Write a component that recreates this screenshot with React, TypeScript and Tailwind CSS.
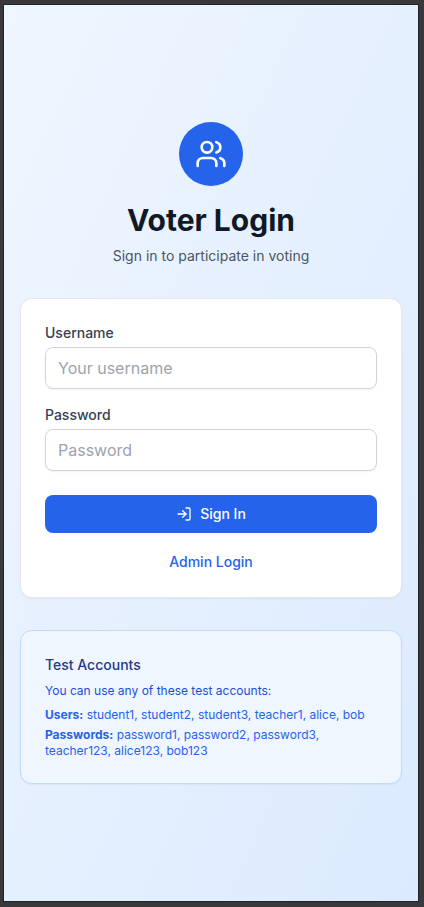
import { LogIn, Users } from "lucide-react";

function Field({ label, placeholder, type }: { label: string; placeholder: string; type: string }) {
  return (
    <div>
      <label className="block text-sm font-medium leading-5 text-[#374151]">{label}</label>
      <input
        type={type}
        placeholder={placeholder}
        className="mt-1 block h-[42px] w-full rounded-lg border border-[#d1d5db] bg-white px-3 text-base shadow-[0_1px_2px_0_rgba(0,0,0,0.05)] placeholder:text-[#9ca3af]"
      />
    </div>
  );
}

export default function App() {
  return (
    <div className="h-[907px] w-[424px] bg-[#39393b] pt-1 pr-[5px] pb-[5px] pl-[3px] font-['Inter',sans-serif]">
      <div className="h-full border border-[#232325] bg-linear-to-br/srgb from-[#eff6ff] to-[#dbeafe] px-4 pt-[117px]">
        <header className="flex flex-col items-center">
          <div className="flex size-16 items-center justify-center rounded-full bg-[#2563eb]">
            <Users className="size-8 text-white" />
          </div>
          <h1 className="mt-4 text-3xl leading-9 font-bold text-[#111827]">Voter Login</h1>
          <p className="mt-2 text-sm text-[#4b5563]">Sign in to participate in voting</p>
        </header>
        <form className="mt-8 h-[300px] rounded-xl border border-[#e5e7eb] bg-white px-6 pt-6 shadow-[0_1px_2px_0_rgba(0,0,0,0.05)]">
          <div className="space-y-4">
            <Field label="Username" placeholder="Your username" type="text" />
            <Field label="Password" placeholder="Password" type="password" />
          </div>
          <button
            type="button"
            className="mt-6 flex h-[38px] w-full items-center justify-center gap-2 rounded-lg bg-[#2563eb] text-sm font-medium text-white"
          >
            <LogIn className="size-4" />
            Sign In
          </button>
          <a className="mt-[19px] block text-center text-sm font-medium text-[#2563eb]">Admin Login</a>
        </form>
        <section className="mt-8 h-[154px] rounded-xl border border-[#bfdbfe] bg-[#eff6ff] px-6 pt-6 shadow-[0_1px_2px_0_rgba(0,0,0,0.05)]">
          <h2 className="text-sm font-medium text-[#1e3a8a]">Test Accounts</h2>
          <p className="mt-2 text-xs text-[#1d4ed8]">You can use any of these test accounts:</p>
          <div className="mt-2 space-y-1 text-xs text-[#2563eb]">
            <p>
              <strong>Users:</strong> student1, student2, student3, teacher1, alice, bob
            </p>
            <p>
              <strong>Passwords:</strong> password1, password2, password3, teacher123, alice123, bob123
            </p>
          </div>
        </section>
      </div>
    </div>
  );
}
